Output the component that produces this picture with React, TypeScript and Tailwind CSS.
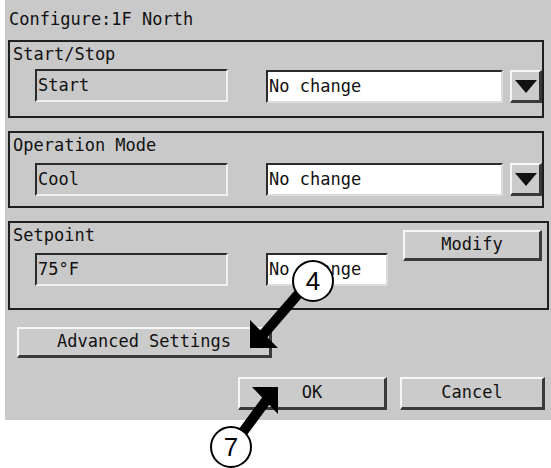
import React from "react";

function Sunken({ text, width }: { text: string; width: string }) {
  return (
    <div
      className={`${width} h-[33px] flex items-center pl-[1px] border-2 border-t-[#2b2b2b] border-l-[#2b2b2b] border-b-[#f0f0f0] border-r-[#f0f0f0] bg-[#c9c9c9]`}
    >
      {text}
    </div>
  );
}

function WhiteField({ text, width }: { text: string; width: string }) {
  return (
    <div
      className={`${width} h-[33px] flex items-center pl-[1px] bg-white border-2 border-t-[#2b2b2b] border-l-[#2b2b2b] border-b-[#dcdcdc] border-r-[#dcdcdc]`}
    >
      {text}
    </div>
  );
}

function Raised({ label, className }: { label: string; className: string }) {
  return (
    <div
      className={`${className} flex items-center justify-center bg-[#cbcbcb] border-t-2 border-l-2 border-r-[3px] border-b-[3px] border-t-[#f6f6f6] border-l-[#f6f6f6] border-r-[#3a3a3a] border-b-[#3a3a3a]`}
    >
      {label}
    </div>
  );
}

function DropButton() {
  return (
    <div className="ml-[7px] w-[32px] h-[33px] flex items-center justify-center bg-[#cbcbcb] border-t-2 border-l-2 border-r-[3px] border-b-[3px] border-t-[#f6f6f6] border-l-[#f6f6f6] border-r-[#3a3a3a] border-b-[#3a3a3a]">
      <svg width="22" height="13" viewBox="0 0 22 13">
        <polygon points="0,0 22,0 11,13" fill="#111" />
      </svg>
    </div>
  );
}

function Group({ label, children, className }: { label: string; children: React.ReactNode; className: string }) {
  return (
    <div className={`${className} border-2 border-[#1f1f1f]`}>
      <div className="pl-[3px] pt-[2px] leading-[20px]">{label}</div>
      {children}
    </div>
  );
}

export default function App() {
  return (
    <div className="relative w-[551px] h-[468px] bg-white text-[#111] text-[17px] font-['DejaVu_Sans_Mono',monospace]">
      <div className="ml-[5px] w-[546px] h-[420px] bg-[#c9c9c9] pl-[3px] flex flex-col">
        <div className="h-[40px] pt-[9px] pl-[1px] leading-[20px]">Configure:1F North</div>

        <Group label="Start/Stop" className="w-[536px] h-[78px]">
          <div className="flex mt-[5px] pl-[25px]">
            <Sunken text="Start" width="w-[193px]" />
            <div className="ml-[38px] mt-[1px] flex">
              <WhiteField text="No change" width="w-[237px]" />
              <DropButton />
            </div>
          </div>
        </Group>

        <Group label="Operation Mode" className="mt-[13px] w-[536px] h-[77px]">
          <div className="flex mt-[8px] pl-[25px]">
            <Sunken text="Cool" width="w-[193px]" />
            <div className="ml-[38px] flex">
              <WhiteField text="No change" width="w-[237px]" />
              <DropButton />
            </div>
          </div>
        </Group>

        <div className="mt-[13px] w-[541px] h-[89px] border-2 border-[#1f1f1f] flex">
          <div className="flex flex-col">
            <div className="pl-[3px] pt-[2px] leading-[20px]">Setpoint</div>
            <div className="flex mt-[8px] pl-[25px]">
              <Sunken text="75°F" width="w-[193px]" />
              <div className="ml-[38px]">
                <WhiteField text="No change" width="w-[122px]" />
              </div>
            </div>
          </div>
          <Raised label="Modify" className="ml-auto mr-[5px] mt-[7px] w-[139px] h-[31px]" />
        </div>

        <Raised label="Advanced Settings" className="mt-[17px] ml-[9px] w-[255px] h-[31px]" />

        <div className="mt-[19px] flex">
          <Raised label="OK" className="ml-[230px] w-[149px] h-[33px]" />
          <Raised label="Cancel" className="ml-[13px] w-[145px] h-[33px]" />
        </div>
      </div>

      <svg className="absolute left-0 top-0 pointer-events-none" width="551" height="468" viewBox="0 0 551 468">
        <line x1="300" y1="292" x2="262" y2="336" stroke="#000" strokeWidth="10" />
        <polygon points="250,348 250,320 278,348" fill="#000" />
        <circle cx="313" cy="281" r="20" fill="#fff" stroke="#000" strokeWidth="2" />
        <text x="313" y="290" textAnchor="middle" fontFamily="Liberation Sans, Arial, sans-serif" fontSize="26" fill="#000">4</text>

        <line x1="268" y1="398" x2="240" y2="436" stroke="#000" strokeWidth="10" />
        <polygon points="278,387 252,387 278,414" fill="#000" />
        <circle cx="231" cy="447" r="20" fill="#fff" stroke="#000" strokeWidth="2" />
        <text x="231" y="456" textAnchor="middle" fontFamily="Liberation Sans, Arial, sans-serif" fontSize="26" fill="#000">7</text>
      </svg>
    </div>
  );
}
